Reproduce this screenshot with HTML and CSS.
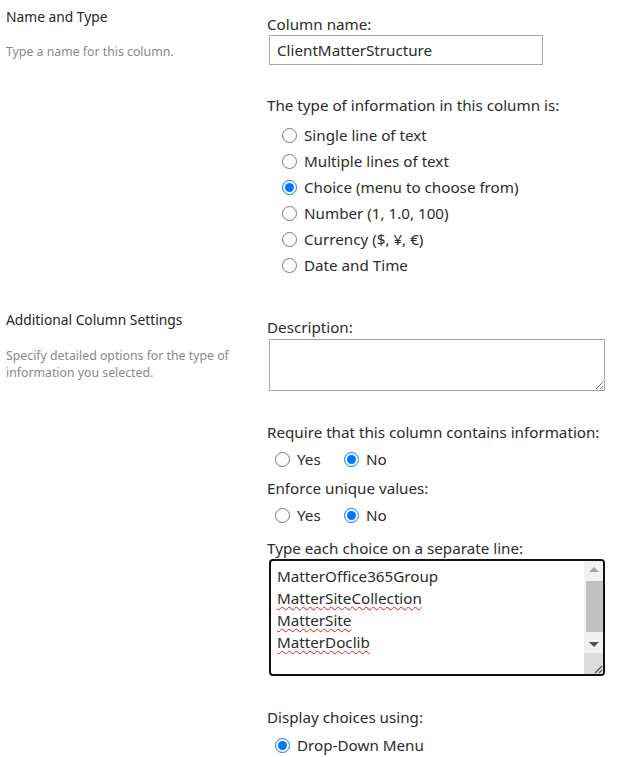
FILE: index.html
```html
<!DOCTYPE html>
<html>
<head>
<meta charset="utf-8">
<link rel="stylesheet" href="styles.css">
</head>
<body>
<div class="form">
  <section class="section sec-name">
    <div class="side">
      <div class="side-title">Name and Type</div>
      <div class="side-desc">Type a name for this column.</div>
    </div>
    <div class="main">
      <div class="label first">Column name:</div>
      <div class="textbox">ClientMatterStructure</div>
      <div class="label type-label">The type of information in this column is:</div>
      <div class="radio-list">
        <label class="radio-row"><input type="radio" name="t"> Single line of text</label>
        <label class="radio-row"><input type="radio" name="t"> Multiple lines of text</label>
        <label class="radio-row"><input type="radio" name="t" checked> Choice (menu to choose from)</label>
        <label class="radio-row"><input type="radio" name="t"> Number (1, 1.0, 100)</label>
        <label class="radio-row"><input type="radio" name="t"> Currency ($, ¥, €)</label>
        <label class="radio-row"><input type="radio" name="t"> Date and Time</label>
      </div>
    </div>
  </section>
  <section class="section sec-add">
    <div class="side">
      <div class="side-title">Additional Column Settings</div>
      <div class="side-desc">Specify detailed options for the type of information you selected.</div>
    </div>
    <div class="main">
      <div class="label first">Description:</div>
      <div class="desc-box"></div>
      <div class="label req-label">Require that this column contains information:</div>
      <div class="yesno">
        <label class="yn-item yes"><input type="radio" name="r"> Yes</label>
        <label class="yn-item"><input type="radio" name="r" checked> No</label>
      </div>
      <div class="label enf-label">Enforce unique values:</div>
      <div class="yesno">
        <label class="yn-item yes"><input type="radio" name="u"> Yes</label>
        <label class="yn-item"><input type="radio" name="u" checked> No</label>
      </div>
      <div class="label choice-label">Type each choice on a separate line:</div>
      <div class="choice-box">
        <div class="choice-text">
          <div class="choice-line">MatterOffice365Group</div>
          <div class="choice-line"><span class="sp">MatterSiteCollection</span></div>
          <div class="choice-line"><span class="sp">MatterSite</span></div>
          <div class="choice-line"><span class="sp">MatterDoclib</span></div>
        </div>
        <div class="vscroll">
          <div class="sb-btn"><span class="arrow-up"></span></div>
          <div class="sb-track"><div class="sb-thumb"></div></div>
          <div class="sb-btn down"><span class="arrow-down"></span></div>
          <div class="sb-corner">
            <svg width="12" height="12" viewBox="0 0 12 12"><path d="M11 4 L4 11 M11 8 L8 11" stroke="#555" stroke-width="1.2" fill="none"/></svg>
          </div>
        </div>
      </div>
      <div class="label disp-label">Display choices using:</div>
      <label class="radio-row drop"><input type="radio" name="d" checked> Drop-Down Menu</label>
    </div>
  </section>
</div>
</body>
</html>
```

FILE: styles.css
```css
html, body {
  margin: 0;
  padding: 0;
  background: #ffffff;
}
body {
  font-family: "Noto Sans", "Open Sans", Arial, sans-serif;
  color: #333333;
  width: 627px;
  height: 757px;
  overflow: hidden;
}
.section {
  display: grid;
  grid-template-columns: 267px 1fr;
}
.side {
  padding-left: 6px;
}
.side-title {
  font-size: 13.8px;
  line-height: 18px;
  color: #262626;
}
.sec-name .side-title { margin-top: 8px; }
.sec-add .side-title { margin-top: 33px; }
.side-desc {
  font-size: 12.3px;
  line-height: 17px;
  color: #888888;
  margin-top: 17px;
  width: 250px;
}
.sec-add .side-desc { margin-top: 18px; }
.label {
  font-size: 15.2px;
  line-height: 20px;
  color: #2b2b2b;
}
.sec-name .label.first { margin-top: 14px; }
.sec-add .label.first { margin-top: 39px; }
.textbox {
  box-sizing: border-box;
  margin: 1px 0 0 2px;
  width: 274px;
  height: 30px;
  border: 1px solid #a6a6a6;
  font-size: 15.2px;
  line-height: 28px;
  padding-left: 7px;
  color: #2b2b2b;
}
.type-label { margin-top: 30px; }
.radio-list {
  display: flex;
  flex-direction: column;
  margin-top: 7px;
  padding-left: 15px;
}
.radio-row {
  display: flex;
  align-items: center;
  height: 26px;
  font-size: 15.2px;
  color: #2b2b2b;
}
.radio-row input, .yn-item input {
  width: 15px;
  height: 15px;
  margin: 0 7px 0 0;
}
.desc-box {
  box-sizing: border-box;
  margin: 2px 0 0 2px;
  width: 336px;
  height: 52px;
  border: 1px solid #a6a6a6;
  resize: both;
  overflow: hidden;
}
.req-label { margin-top: 31px; }
.yesno {
  display: flex;
  height: 26px;
  margin-top: 4px;
  padding-left: 8px;
}
.yn-item {
  display: flex;
  align-items: center;
  font-size: 15.2px;
  color: #2b2b2b;
}
.yn-item.yes { width: 69px; }
.enf-label { margin-top: 6px; }
.choice-label { margin-top: 10px; }
.choice-box {
  box-sizing: border-box;
  display: flex;
  margin: 1px 0 0 2px;
  width: 336px;
  height: 117px;
  border: 2px solid #111111;
  border-radius: 4px;
  overflow: hidden;
}
.choice-text {
  flex: 1;
  padding: 4px 0 0 6px;
  font-size: 15.2px;
  color: #2b2b2b;
}
.choice-line {
  line-height: 22px;
  white-space: nowrap;
}
.sp {
  text-decoration: underline wavy #e0191e;
  text-decoration-skip-ink: none;
  text-underline-offset: 2px;
  text-decoration-thickness: 1px;
}
.vscroll {
  width: 19px;
  display: flex;
  flex-direction: column;
  background: #f1f1f1;
}
.sb-btn {
  height: 17px;
  display: flex;
  align-items: center;
  justify-content: center;
}
.sb-btn.down { height: 18px; }
.arrow-up {
  width: 0;
  height: 0;
  border-left: 5px solid transparent;
  border-right: 5px solid transparent;
  border-bottom: 5px solid #a3a3a3;
}
.arrow-down {
  width: 0;
  height: 0;
  border-left: 5px solid transparent;
  border-right: 5px solid transparent;
  border-top: 5px solid #505050;
}
.sb-track {
  height: 57px;
  padding: 3px 0 0 2px;
  box-sizing: border-box;
}
.sb-thumb {
  height: 51px;
  background: #c1c1c1;
}
.sb-corner {
  flex: 1;
  background: #dcdcdc;
  display: flex;
  align-items: flex-end;
  justify-content: flex-end;
}
.disp-label { margin-top: 31px; }
.radio-row.drop {
  margin-top: 5px;
  padding-left: 8px;
}
```
